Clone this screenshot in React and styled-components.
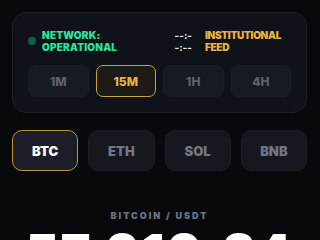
import React, { useState } from "react";
import styled, { createGlobalStyle } from "styled-components";

const GlobalStyle = createGlobalStyle`
  html, body {
    margin: 0;
    padding: 0;
    background: #07090d;
  }
  body {
    font-family: Inter, "Liberation Sans", sans-serif;
    -webkit-font-smoothing: antialiased;
  }
`;

const Page = styled.div`
  width: 320px;
  height: 240px;
  overflow: hidden;
  box-sizing: border-box;
  padding: 12px 13px 0 12px;
  background: #07090d;
`;

const Card = styled.section`
  box-sizing: border-box;
  height: 101px;
  border: 1px solid #1c2028;
  border-radius: 14px;
  background: #0f1218;
  padding: 16px 15px 15px 15px;
  display: flex;
  flex-direction: column;
  gap: 12px;
`;

const StatusRow = styled.div`
  display: flex;
  align-items: center;
  justify-content: space-between;
  padding-right: 10px;
`;

const Group = styled.div`
  display: flex;
  align-items: center;
  gap: ${(p) => p.gap || 6}px;
`;

const Dot = styled.span`
  width: 8px;
  height: 8px;
  border-radius: 50%;
  background: #0f5f4a;
  flex-shrink: 0;
`;

const Label = styled.div`
  font-size: 10px;
  line-height: 12px;
  font-weight: 900;
  letter-spacing: ${(p) => p.spacing || 0}px;
  color: ${(p) => p.color};
`;

const Clock = styled.div`
  font-size: 10px;
  line-height: 12px;
  font-weight: 700;
  color: #e8eaee;
`;

const TimeGrid = styled.div`
  display: grid;
  grid-template-columns: repeat(4, 1fr);
  gap: 7px;
`;

const TimeButton = styled.button`
  height: 32px;
  border-radius: 7px;
  border: 1px solid ${(p) => (p.active ? "#c9a13a" : "#191d24")};
  background: ${(p) => (p.active ? "#1d1b16" : "#161a21")};
  color: ${(p) => (p.active ? "#e6b53e" : "#5b626e")};
  font-family: Inter, "Liberation Sans", sans-serif;
  font-size: 12px;
  font-weight: 800;
  padding: 0;
  cursor: pointer;
`;

const AssetRow = styled.div`
  margin-top: 17px;
  display: grid;
  grid-template-columns: repeat(4, 1fr);
  gap: 10px;
`;

const AssetButton = styled.button`
  height: 41px;
  border-radius: 10px;
  border: 1px solid ${(p) => (p.active ? "#b8943a" : "#1a1e25")};
  background: ${(p) => (p.active ? "#1b1e29" : "#15181e")};
  color: ${(p) => (p.active ? "#ffffff" : "#6f7785")};
  font-family: Inter, "Liberation Sans", sans-serif;
  font-size: 13px;
  font-weight: 900;
  padding: 0;
  cursor: pointer;
`;

const Pair = styled.div`
  margin-top: 39px;
  text-align: center;
  font-size: 9px;
  line-height: 12px;
  font-weight: 900;
  letter-spacing: 2px;
  color: #6c7482;
`;

const Price = styled.div`
  margin-top: 5px;
  text-align: center;
  font-size: 50px;
  line-height: 50px;
  font-weight: 900;
  color: #ffffff;
  letter-spacing: 2px;
  white-space: nowrap;
`;

const times = ["1M", "15M", "1H", "4H"];
const assets = ["BTC", "ETH", "SOL", "BNB"];

export default function App() {
  const [time, setTime] = useState("15M");
  const [asset, setAsset] = useState("BTC");

  return (
    <Page>
      <GlobalStyle />
      <Card>
        <StatusRow>
          <Group gap={6}>
            <Dot />
            <Label color="#2be39a" spacing={0.2}>
              NETWORK:
              <br />
              OPERATIONAL
            </Label>
          </Group>
          <Group gap={13}>
            <Clock>
              --:-
              <br />
              -:--
            </Clock>
            <Label color="#e8b542" spacing={-0.3}>
              INSTITUTIONAL
              <br />
              FEED
            </Label>
          </Group>
        </StatusRow>
        <TimeGrid>
          {times.map((t) => (
            <TimeButton key={t} active={t === time} onClick={() => setTime(t)}>
              {t}
            </TimeButton>
          ))}
        </TimeGrid>
      </Card>
      <AssetRow>
        {assets.map((a) => (
          <AssetButton key={a} active={a === asset} onClick={() => setAsset(a)}>
            {a}
          </AssetButton>
        ))}
      </AssetRow>
      <Pair>BITCOIN / USDT</Pair>
      <Price>57,910.24</Price>
    </Page>
  );
}
